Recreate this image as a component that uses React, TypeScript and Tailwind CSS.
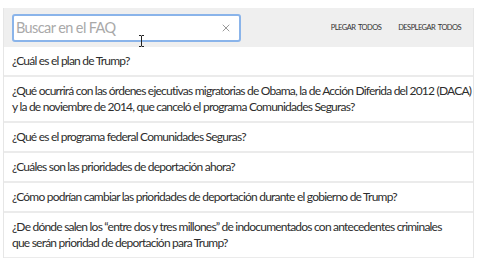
import { X } from "lucide-react";

const QUESTIONS = [
  ["¿Cuál es el plan de Trump?"],
  [
    "¿Qué ocurrirá con las órdenes ejecutivas migratorias de Obama, la de Acción Diferida del 2012 (DACA)",
    "y la de noviembre de 2014, que canceló el programa Comunidades Seguras?",
  ],
  ["¿Qué es el programa federal Comunidades Seguras?"],
  ["¿Cuáles son las prioridades de deportación ahora?"],
  ["¿Cómo podrían cambiar las prioridades de deportación durante el gobierno de Trump?"],
  [
    "¿De dónde salen los “entre dos y tres millones” de indocumentados con antecedentes criminales",
    "que serán prioridad de deportación para Trump?",
  ],
];

// text cursor that sits over the search box in the capture
const IBeam = () => (
  <svg
    className="absolute left-[138px] top-[35px]"
    width="7"
    height="12"
    viewBox="0 0 7 12"
    fill="none"
    stroke="#222"
    strokeWidth="1"
  >
    <path d="M1 0.5h2l0.5 0.5 0.5-0.5h2M3.5 1v10M1 11.5h2l0.5-0.5 0.5 0.5h2" />
  </svg>
);

export default function App() {
  return (
    <div className="relative h-[258px] w-[480px] overflow-hidden bg-white pt-2 pl-[3px] font-['Lato',sans-serif]">
      <div className="w-[471px] border-l border-r border-[#e6e6e6] bg-white">
        <div className="flex h-[39px] items-center bg-[#efefef] pl-2 pr-2">
          <div className="flex h-[28px] w-[229px] items-center rounded-[3px] border-2 border-[#8ab4ea] bg-white pl-[2px] pr-[7px]">
            <span className="flex-1 text-[14.5px] tracking-[-0.6px] text-[#a9a9a9]">Buscar en el FAQ</span>
            <X size={12} strokeWidth={1.5} className="text-[#777]" />
          </div>
          <div className="ml-auto flex gap-[17px] pr-[4px] text-[7.5px] tracking-[-0.55px] [word-spacing:1.5px] text-[#333]">
            <span>PLEGAR TODOS</span>
            <span>DESPLEGAR TODOS</span>
          </div>
        </div>
        {QUESTIONS.map((lines, i) => (
          <div
            key={i}
            className="border-b-2 border-[#ebebeb] px-2 py-[6px] text-[12px] leading-[16px] tracking-[-0.78px] text-[#2d2d2d]"
          >
            {lines.map((l) => (
              <div key={l} className="whitespace-nowrap">
                {l}
              </div>
            ))}
          </div>
        ))}
      </div>
      <IBeam />
    </div>
  );
}
